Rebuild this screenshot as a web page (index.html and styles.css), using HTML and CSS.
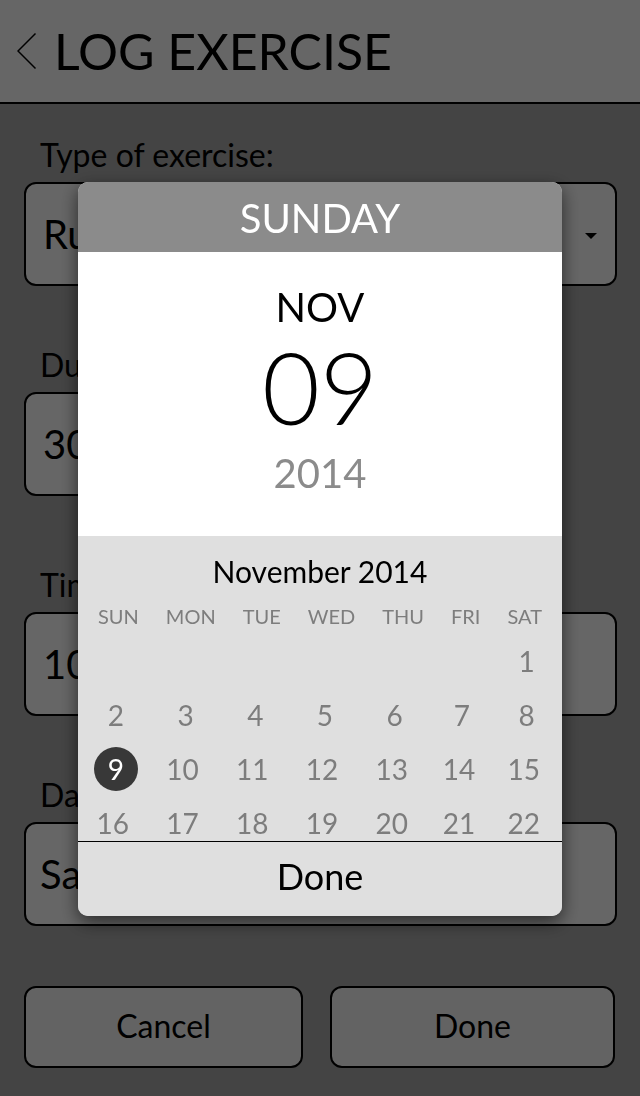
FILE: index.html
```
<!DOCTYPE html>
<html lang="en">
<head>
<meta charset="utf-8">
<meta name="viewport" content="width=device-width, initial-scale=1">
<title>Log Exercise</title>
<link rel="stylesheet" href="styles.css">
</head>
<body>
<header class="topbar">
  <a class="back" href="#" aria-label="Back"><svg width="20" height="38" viewBox="0 0 20 38" fill="none" stroke="#000" stroke-width="1.5"><path d="M18.5 1.5 1 19 18.5 36.5"/></svg></a>
  <h1 class="title">LOG EXERCISE</h1>
</header>
<form class="form">
  <div class="field">
    <label class="label" for="type">Type of exercise:</label>
    <div class="select-wrap">
      <select class="control" id="type"><option>Running</option><option>Cycling</option></select>
      <svg class="caret" width="12" height="6" viewBox="0 0 12 6"><path d="M0 0h12L6 6z"/></svg>
    </div>
  </div>
  <div class="field">
    <label class="label" for="duration">Duration:</label>
    <input class="control control-short" id="duration" type="text" value="30">
  </div>
  <div class="field field-spaced">
    <label class="label" for="time">Time:</label>
    <input class="control" id="time" type="text" value="10:00 AM">
  </div>
  <div class="field">
    <label class="label" for="date">Date:</label>
    <input class="control control-date" id="date" type="text" value="Sat, Nov 8, 2014">
  </div>
  <div class="actions">
    <button class="action" type="button">Cancel</button>
    <button class="action" type="button">Done</button>
  </div>
</form>

<div class="overlay">
  <section class="picker" role="dialog" aria-label="Choose a date">
    <div class="weekday">SUNDAY</div>
    <div class="chosen">
      <div class="chosen-month">NOV</div>
      <div class="chosen-day">09</div>
      <div class="chosen-year">2014</div>
    </div>
    <div class="calendar">
      <table class="month">
        <caption class="month-name">November 2014</caption>
        <thead><tr class="names"><th>SUN</th><th>MON</th><th>TUE</th><th>WED</th><th>THU</th><th>FRI</th><th>SAT</th></tr></thead>
        <tbody>
          <tr class="week"><td></td><td></td><td></td><td></td><td></td><td></td><td class="single">1</td></tr>
          <tr class="week"><td class="single">2</td><td class="single">3</td><td class="single">4</td><td class="single">5</td><td class="single">6</td><td class="single">7</td><td class="single">8</td></tr>
          <tr class="week"><td class="single"><span class="selected">9</span></td><td>10</td><td>11</td><td>12</td><td>13</td><td>14</td><td>15</td></tr>
          <tr class="week"><td>16</td><td>17</td><td>18</td><td>19</td><td>20</td><td>21</td><td>22</td></tr>
        </tbody>
      </table>
    </div>
    <button class="picker-done" type="button">Done</button>
  </section>
</div>
</body>
</html>
```
FILE: styles.css
```
* { box-sizing: border-box; }

body {
  margin: 0;
  min-height: 100vh;
  background: #aaa;
  color: #000;
  font-family: Lato, "Liberation Sans", sans-serif;
}

.topbar {
  display: flex;
  align-items: center;
  gap: 17px;
  height: 104px;
  padding: 0 17px;
  background: #fff;
  border-bottom: 2px solid #000;
}

.back { display: flex; }

.title {
  margin: 0;
  font-size: 50px;
  font-weight: 400;
  line-height: 60px;
}

.form { padding: 31px 23px 28px 24px; }

.field { margin-bottom: 59px; }
.field + .field-spaced { margin-top: 69px; }

.label {
  display: block;
  padding-left: 16px;
  font-size: 32px;
  line-height: 40px;
  margin-bottom: 7px;
}

.control {
  display: block;
  width: 100%;
  height: 104px;
  padding: 0 17px;
  border: 2px solid #000;
  border-radius: 12px;
  background: #fff;
  color: #000;
  font: 400 40px/48px Lato, "Liberation Sans", sans-serif;
  appearance: none;
}

.control-short { width: 50%; }
.control-date { padding-left: 14px; }

.select-wrap { position: relative; }

.caret {
  position: absolute;
  top: 51px;
  right: 20px;
}

.actions {
  display: grid;
  grid-template-columns: 279fr 285fr;
  gap: 27px;
  padding: 1px 2px 0 0;
}

.action {
  height: 82px;
  padding: 0 0 2px;
  border: 2px solid #000;
  border-radius: 12px;
  background: #f8f8f8;
  color: #000;
  font: 400 32px/40px Lato, "Liberation Sans", sans-serif;
}

.overlay {
  position: fixed;
  inset: 0;
  display: flex;
  align-items: center;
  justify-content: center;
  padding: 2px 78px 0;
  background: rgba(0, 0, 0, 0.6);
}

.picker {
  flex: 1;
  max-width: 600px;
  overflow: hidden;
  border-radius: 10px;
  background: #dfdfdf;
  box-shadow: 0 6px 18px rgba(0, 0, 0, 0.6);
}

.weekday {
  padding: 12px 0 10px;
  background: #8b8b8b;
  color: #fff;
  font-size: 40px;
  line-height: 48px;
  text-align: center;
}

.chosen {
  padding: 31px 0 39px;
  background: #fff;
  text-align: center;
}

.chosen-month {
  font-size: 40px;
  line-height: 48px;
}

.chosen-day {
  padding-bottom: 8px;
  font-size: 100px;
  font-weight: 300;
  line-height: 110px;
}

.chosen-year {
  color: #8b8b8b;
  font-size: 40px;
  line-height: 48px;
}

.calendar {
  height: 305px;
  overflow: hidden;
}

.month, .month thead, .month tbody, .month-name { display: block; }

.month-name {
  padding-top: 17px;
  font-size: 30px;
  line-height: 36px;
}

.names {
  display: flex;
  justify-content: space-between;
  padding: 15px 20px 6px;
}

.names th {
  padding: 0;
  color: #7d7d7d;
  font-size: 20px;
  font-weight: 400;
  line-height: 24px;
}

.week {
  display: grid;
  grid-template-columns: repeat(5, 70fr) repeat(2, 65fr);
  align-items: center;
  height: 54px;
  padding-right: 6px;
}

.week td {
  padding: 0;
  color: #7d7d7d;
  font-size: 28px;
  line-height: 34px;
  text-align: center;
}

.week .single { padding-left: 6px; }

.selected {
  display: block;
  width: 44px;
  margin: 0 auto;
  border-radius: 50%;
  background: #383838;
  color: #fff;
  line-height: 44px;
}

.picker-done {
  display: block;
  width: 100%;
  height: 75px;
  padding: 0 0 6px;
  border: 0;
  border-top: 1px solid #000;
  background: #dfdfdf;
  color: #000;
  font: 400 36px/44px Lato, "Liberation Sans", sans-serif;
}
```
